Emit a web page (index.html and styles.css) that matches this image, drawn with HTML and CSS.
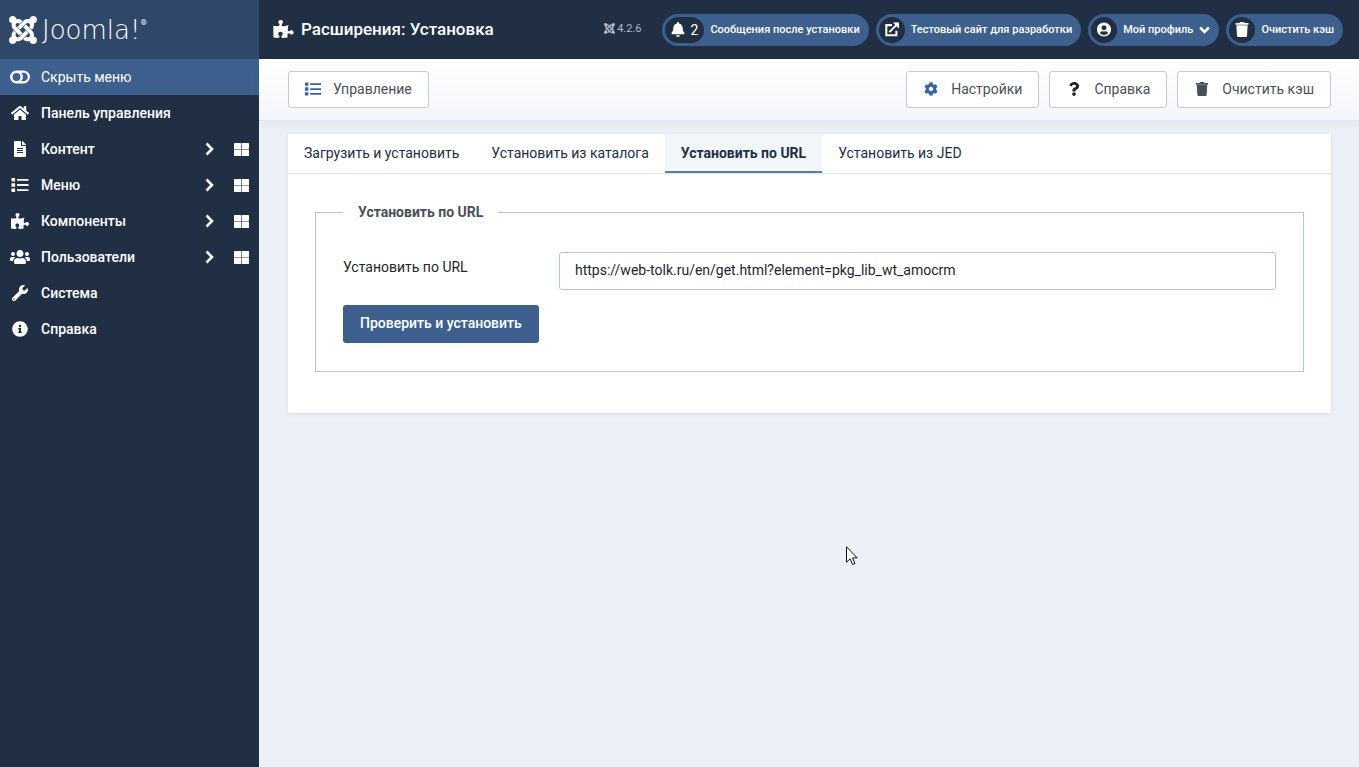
FILE: index.html
```html
<!DOCTYPE html>
<html lang="ru">
<head>
<meta charset="utf-8">
<meta name="viewport" content="width=device-width, initial-scale=1">
<title>Расширения: Установка</title>
<link rel="stylesheet" href="styles.css">
</head>
<body>
<svg class="sprite" aria-hidden="true">
  <symbol id="joomla" viewBox="0 32 448 448"><path d="M.6 92.1C.6 58.8 27.4 32 60.4 32c30 0 54.5 21.9 59.2 50.2 32.6-7.6 67.1.6 96.5 30l-44.3 44.3c-20.5-20.5-42.6-16.3-55.4-3.5-14.3 14.3-14.3 37.9 0 52.2l99.5 99.5-44 44.3c-87.7-87.2-49.7-49.7-99.8-99.7-26.8-26.5-35-64.8-24.8-98.9C20.4 144.6.6 120.7.6 92.1zm129.5 116.4l44.3 44.3c10-10 89.7-89.7 99.7-99.8 14.3-14.3 37.6-14.3 51.9 0 12.8 12.8 17 35-3.5 55.4l44 44.3c31.2-31.2 38.5-67.6 28.9-101.2 29.2-4.1 51.9-29.2 51.9-59.5 0-33.2-26.8-60.1-59.8-60.1-30.3 0-55.4 22.5-59.5 51.6-33.8-9.9-71.7-1.5-98.3 25.1-18.3 19.1-71.1 71.5-99.6 99.9zm266.3 152.2c8.2-32.7-.9-68.5-26.3-93.9-11.8-12.2 5 4.7-99.5-99.7l-44.3 44.3 99.7 99.7c14.3 14.3 14.3 37.6 0 51.9-12.8 12.8-35 17-55.4-3.5l-44 44.3c27.6 30.2 68 38.8 102.7 28 5.5 27.4 29.7 48.1 58.9 48.1 33 0 59.8-26.8 59.8-60.1 0-30.2-22.5-55-51.6-59.1zm-84.3-53.1l-44-44.3c-87 86.4-50.4 50.4-99.7 99.8-14.3 14.3-37.6 14.3-51.9 0-13.1-13.4-16.9-35.3 3.2-55.4l-44-44.3c-30.2 30.2-38 65.2-29.5 98.3-26.7 6-46.2 29.9-46.2 58.2C0 453.2 26.8 480 59.8 480c28.6 0 52.5-19.8 58.6-46.7 32.7 8.2 68.5-.6 94.2-26 32.1-32 12.2-12.4 99.5-99.7z"/></symbol>
  <symbol id="toggle" viewBox="0 0 20 13"><path fill-rule="evenodd" d="M6.500 0h7a6.500 6.500 0 0 1 0 13h-7a6.500 6.500 0 0 1 0-13zM6.500 2.500a4 4 0 1 0 0 8 4 4 0 0 0 0-8zM11.300 2.200h2.200a4.300 4.300 0 0 1 0 8.600h-2.200a6.500 6.500 0 0 0 0-8.600z"/></symbol>
  <symbol id="home" viewBox="0 0 576 512"><path d="M280.37 148.26L96 300.11V464a16 16 0 0 0 16 16l112.06-.29a16 16 0 0 0 15.92-16V368a16 16 0 0 1 16-16h64a16 16 0 0 1 16 16v95.64a16 16 0 0 0 16 16.05L464 480a16 16 0 0 0 16-16V300L295.67 148.26a12.19 12.19 0 0 0-15.3 0zM571.6 251.47L488 182.56V44.05a12 12 0 0 0-12-12h-56a12 12 0 0 0-12 12v72.61L318.47 43a48 48 0 0 0-61 0L4.34 251.47a12 12 0 0 0-1.6 16.9l25.5 31A12 12 0 0 0 45.15 301l235.22-193.74a12.19 12.19 0 0 1 15.3 0L530.9 301a12 12 0 0 0 16.9-1.6l25.5-31a12 12 0 0 0-1.7-16.93z"/></symbol>
  <symbol id="file" viewBox="0 0 384 512"><path d="M224 136V0H24C10.7 0 0 10.7 0 24v464c0 13.3 10.7 24 24 24h336c13.3 0 24-10.7 24-24V160H248c-13.2 0-24-10.8-24-24zm64 236c0 6.6-5.4 12-12 12H108c-6.600 0-12-5.400-12-12v-8c0-6.600 5.400-12 12-12h168c6.600 0 12 5.400 12 12v8zm0-64c0 6.600-5.400 12-12 12H108c-6.600 0-12-5.400-12-12v-8c0-6.600 5.400-12 12-12h168c6.600 0 12 5.400 12 12v8zm0-72v8c0 6.600-5.400 12-12 12H108c-6.600 0-12-5.400-12-12v-8c0-6.600 5.400-12 12-12h168c6.600 0 12 5.400 12 12zm96-114.100v6.100H256V0h6.100c6.400 0 12.500 2.500 17 7l97.900 98c4.500 4.500 7 10.600 7 16.900z"/></symbol>
  <symbol id="list" viewBox="0 0 17 14"><path d="M0 0h3.600v3.600H0zM0 5.200h3.600v3.600H0zM0 10.400h3.600V14H0zM5.500 .9h11.500v1.900H5.500zM5.500 6.100h11.500V8H5.500zM5.500 11.200h11.500v1.900H5.500z"/></symbol>
  <symbol id="puzzle" viewBox="0 0 576 512"><path d="M519.442 288.651c-41.519 0-59.5 31.593-82.058 31.593C377.409 320.244 432 144 432 144s-196.288 80-196.288-3.297c0-35.827 36.288-46.25 36.288-85.985C272 19.216 243.885 0 210.539 0c-34.654 0-66.366 18.891-66.366 56.346 0 41.364 31.711 59.277 31.711 81.75C175.885 207.719 0 166.758 0 166.758v333.237s178.635 41.047 178.635-28.662c0-22.473-40-40.107-40-81.471 0-37.456 29.25-56.346 63.577-56.346 33.673 0 61.788 19.216 61.788 54.717 0 39.735-36.288 50.158-36.288 85.985 0 60.803 129.675 25.73 181.23 25.73 0 0-34.725-120.101 25.827-120.101 35.962 0 46.423 36.152 86.308 36.152C556.712 416 576 387.99 576 354.443c0-34.199-18.962-65.792-56.558-65.792z"/></symbol>
  <symbol id="users" viewBox="0 0 640 512"><path d="M96 224c35.3 0 64-28.7 64-64s-28.7-64-64-64-64 28.7-64 64 28.7 64 64 64zm448 0c35.3 0 64-28.7 64-64s-28.7-64-64-64-64 28.7-64 64 28.7 64 64 64zm32 32h-64c-17.6 0-33.5 7.1-45.1 18.6 40.3 22.1 68.9 62 75.1 109.4h66c17.7 0 32-14.3 32-32v-32c0-35.3-28.7-64-64-64zm-256 0c61.9 0 112-50.1 112-112S381.9 32 320 32 208 82.1 208 144s50.1 112 112 112zm76.8 32h-8.3c-20.8 10-43.9 16-68.5 16s-47.6-6-68.5-16h-8.3C179.6 288 128 339.6 128 403.2V432c0 26.5 21.5 48 48 48h288c26.5 0 48-21.5 48-48v-28.8c0-63.6-51.6-115.2-115.2-115.2zm-223.7-13.4C161.5 263.1 145.6 256 128 256H64c-35.3 0-64 28.7-64 64v32c0 17.7 14.3 32 32 32h65.9c6.3-47.4 34.9-87.3 75.2-109.4z"/></symbol>
  <symbol id="wrench" viewBox="0 0 512 512"><path d="M507.73 109.1c-2.24-9.03-13.54-12.09-20.12-5.51l-74.36 74.36-67.88-11.31-11.31-67.88 74.36-74.36c6.62-6.62 3.43-17.9-5.66-20.16-47.38-11.74-99.55.91-136.58 37.93-39.64 39.64-50.55 97.1-34.05 147.2L18.74 402.76c-24.99 24.99-24.99 65.51 0 90.5 24.99 24.99 65.51 24.99 90.5 0l213.21-213.21c50.12 16.71 107.47 5.68 147.37-34.22 37.07-37.07 49.7-89.32 37.91-136.73zM64 472c-13.25 0-24-10.75-24-24 0-13.26 10.75-24 24-24s24 10.74 24 24c0 13.25-10.75 24-24 24z"/></symbol>
  <symbol id="info" viewBox="0 0 512 512"><path d="M256 8C119.043 8 8 119.083 8 256c0 136.997 111.043 248 248 248s248-111.003 248-248C504 119.083 392.957 8 256 8zm0 110c23.196 0 42 18.804 42 42s-18.804 42-42 42-42-18.804-42-42 18.804-42 42-42zm56 254c0 6.627-5.373 12-12 12h-88c-6.627 0-12-5.373-12-12v-24c0-6.627 5.373-12 12-12h12v-64h-12c-6.627 0-12-5.373-12-12v-24c0-6.627 5.373-12 12-12h64c6.627 0 12 5.373 12 12v100h12c6.627 0 12 5.373 12 12v24z"/></symbol>
  <symbol id="chevron" viewBox="0 0 10 14"><path d="M1.500 1.500L7 7l-5.500 5.500" fill="none" stroke="currentColor" stroke-width="2.600"/></symbol>
  <symbol id="chevron-down" viewBox="0 0 11 8"><path d="M1.200 1.500l4.300 4.300 4.300-4.300" fill="none" stroke="currentColor" stroke-width="2.600"/></symbol>
  <symbol id="grid" viewBox="0 0 15 13"><path d="M.5 0h6.700v6.200H0V.5zM7.800 0h6.700l.5.500v5.700H7.800zM0 6.800h7.200V13H.5l-.5-.5zM7.800 6.800H15v5.700l-.5.500H7.800z"/></symbol>
  <symbol id="bell" viewBox="0 0 448 512"><path d="M224 512c35.32 0 63.97-28.65 63.97-64H160.03c0 35.35 28.65 64 63.97 64zm215.39-149.71c-19.32-20.76-55.47-51.99-55.47-154.29 0-77.7-54.48-139.9-127.94-155.16V32c0-17.67-14.32-32-31.98-32s-31.98 14.33-31.98 32v20.84C118.56 68.1 64.08 130.3 64.08 208c0 102.3-36.15 133.53-55.47 154.29-6 6.45-8.66 14.16-8.61 21.71.11 16.4 12.98 32 32.1 32h383.8c19.12 0 32-15.6 32.1-32 .05-7.55-2.61-15.27-8.61-21.71z"/></symbol>
  <symbol id="external" viewBox="0 0 16 16"><path d="M8 3H1.500v11.500H13V9.500M5 11L13 3" fill="none" stroke="currentColor" stroke-width="2.300"/><path d="M9 0h7v7z"/></symbol>
  <symbol id="user" viewBox="0 0 496 512"><path d="M248 8C111 8 0 119 0 256s111 248 248 248 248-111 248-248S385 8 248 8zm0 96c48.6 0 88 39.4 88 88s-39.4 88-88 88-88-39.4-88-88 39.4-88 88-88zm0 344c-58.7 0-111.3-26.6-146.5-68.2 18.8-35.4 55.6-59.8 98.5-59.8 2.4 0 4.8.4 7.1 1.1 13 4.2 26.6 6.9 40.9 6.9 14.3 0 28-2.7 40.9-6.9 2.3-.7 4.7-1.1 7.1-1.1 42.9 0 79.7 24.4 98.5 59.8C359.3 421.4 306.7 448 248 448z"/></symbol>
  <symbol id="trash" viewBox="0 0 448 512"><path d="M432 32H312l-9.4-18.7A24 24 0 0 0 281.1 0H166.8a23.72 23.72 0 0 0-21.4 13.3L136 32H16A16 16 0 0 0 0 48v32a16 16 0 0 0 16 16h416a16 16 0 0 0 16-16V48a16 16 0 0 0-16-16zM32 112l21.200 355a48 48 0 0 0 47.9 45h245.8a48 48 0 0 0 47.9-45L416 112z"/></symbol>
  <symbol id="cog" viewBox="0 0 512 512"><path d="M487.4 315.7l-42.6-24.6c4.3-23.2 4.3-47 0-70.2l42.6-24.6c4.9-2.8 7.1-8.6 5.5-14-11.1-35.6-30-67.8-54.7-94.6-3.8-4.1-10-5.1-14.8-2.3L380.8 110c-17.9-15.4-38.5-27.3-60.8-35.1V25.8c0-5.6-3.9-10.5-9.4-11.7-36.7-8.2-74.3-7.8-109.2 0-5.5 1.2-9.4 6.1-9.4 11.7V75c-22.2 7.9-42.8 19.8-60.8 35.1L88.7 85.5c-4.9-2.8-11-1.9-14.8 2.3-24.7 26.7-43.6 58.9-54.7 94.6-1.7 5.4.6 11.2 5.5 14L67.3 221c-4.3 23.2-4.3 47 0 70.2l-42.6 24.6c-4.9 2.8-7.1 8.6-5.5 14 11.1 35.6 30 67.8 54.7 94.6 3.8 4.1 10 5.1 14.8 2.3l42.6-24.6c17.9 15.4 38.5 27.3 60.8 35.1v49.2c0 5.6 3.9 10.5 9.4 11.7 36.7 8.2 74.3 7.8 109.2 0 5.5-1.2 9.4-6.1 9.4-11.7v-49.2c22.2-7.9 42.8-19.8 60.8-35.1l42.6 24.6c4.9 2.8 11 1.9 14.8-2.3 24.7-26.7 43.6-58.9 54.7-94.6 1.5-5.500-.7-11.300-5.600-14.100zM256 336c-44.100 0-80-35.900-80-80s35.900-80 80-80 80 35.900 80 80-35.900 80-80 80z"/></symbol>
  <symbol id="help" viewBox="0 0 384 512"><path d="M202.021 0C122.202 0 70.503 32.703 29.914 91.026c-7.363 10.58-5.093 25.086 5.178 32.874l43.138 32.709c10.373 7.865 25.132 6.026 33.253-4.148 25.049-31.381 43.63-49.449 82.757-49.449 30.764 0 68.816 19.799 68.816 49.631 0 22.552-18.617 34.134-48.993 51.164-35.423 19.86-82.299 44.576-82.299 106.405V320c0 13.255 10.745 24 24 24h72.471c13.255 0 24-10.745 24-24v-5.773c0-42.86 125.268-44.645 125.268-160.627C377.504 66.256 286.902 0 202.021 0zM192 373.459c-38.196 0-69.271 31.075-69.271 69.271 0 38.195 31.075 69.27 69.271 69.27s69.271-31.075 69.271-69.271-31.075-69.27-69.271-69.27z"/></symbol>
</svg>

<aside class="sidebar">
  <a class="brand" href="#"><svg class="brand-mark"><use href="#joomla"/></svg><span class="brand-name">Joomla!</span><span class="brand-reg">®</span></a>
  <button class="menu-toggle" type="button"><svg class="menu-icon"><use href="#toggle"/></svg>Скрыть меню</button>
  <nav class="menu">
    <div class="menu-row"><a class="menu-link" href="#"><svg class="menu-icon"><use href="#home"/></svg>Панель управления</a></div>
    <div class="menu-row"><a class="menu-link" href="#"><svg class="menu-icon"><use href="#file"/></svg>Контент<svg class="menu-arrow"><use href="#chevron"/></svg></a><a class="menu-grid" href="#" aria-label="Панель: Контент"><svg><use href="#grid"/></svg></a></div>
    <div class="menu-row"><a class="menu-link" href="#"><svg class="menu-icon menu-icon-small"><use href="#list"/></svg>Меню<svg class="menu-arrow"><use href="#chevron"/></svg></a><a class="menu-grid" href="#" aria-label="Панель: Меню"><svg><use href="#grid"/></svg></a></div>
    <div class="menu-row"><a class="menu-link" href="#"><svg class="menu-icon"><use href="#puzzle"/></svg>Компоненты<svg class="menu-arrow"><use href="#chevron"/></svg></a><a class="menu-grid" href="#" aria-label="Панель: Компоненты"><svg><use href="#grid"/></svg></a></div>
    <div class="menu-row"><a class="menu-link" href="#"><svg class="menu-icon"><use href="#users"/></svg>Пользователи<svg class="menu-arrow"><use href="#chevron"/></svg></a><a class="menu-grid" href="#" aria-label="Панель: Пользователи"><svg><use href="#grid"/></svg></a></div>
    <div class="menu-row"><a class="menu-link" href="#"><svg class="menu-icon"><use href="#wrench"/></svg>Система</a></div>
    <div class="menu-row"><a class="menu-link" href="#"><svg class="menu-icon"><use href="#info"/></svg>Справка</a></div>
  </nav>
</aside>

<div class="page">
  <header class="header">
    <h1 class="title"><svg class="title-icon"><use href="#puzzle"/></svg>Расширения: Установка</h1>
    <div class="version"><svg><use href="#joomla"/></svg>4.2.6</div>
    <div class="header-items">
      <a class="pill" href="#"><span class="pill-icon"><svg><use href="#bell"/></svg>2</span>Сообщения после установки</a>
      <a class="pill" href="#"><span class="pill-icon"><svg><use href="#external"/></svg></span>Тестовый сайт для разработки</a>
      <button class="pill" type="button"><span class="pill-icon"><svg><use href="#user"/></svg></span>Мой профиль<svg class="caret"><use href="#chevron-down"/></svg></button>
      <a class="pill" href="#"><span class="pill-icon"><svg><use href="#trash"/></svg></span>Очистить кэш</a>
    </div>
  </header>

  <div class="toolbar">
    <button class="btn" type="button"><svg class="blue"><use href="#list"/></svg>Управление</button>
    <div class="toolbar-end">
      <button class="btn" type="button"><svg class="blue"><use href="#cog"/></svg>Настройки</button>
      <button class="btn" type="button"><svg class="dark"><use href="#help"/></svg>Справка</button>
      <button class="btn" type="button"><svg><use href="#trash"/></svg>Очистить кэш</button>
    </div>
  </div>

  <main class="content">
    <section class="card">
      <div class="tabs" role="tablist">
        <button class="tab" type="button" role="tab">Загрузить и установить</button>
        <button class="tab" type="button" role="tab">Установить из каталога</button>
        <button class="tab tab-active" type="button" role="tab" aria-selected="true">Установить по URL</button>
        <button class="tab" type="button" role="tab">Установить из JED</button>
      </div>
      <form class="panel">
        <fieldset class="fieldset">
          <legend class="legend">Установить по URL</legend>
          <div class="field">
            <label class="label" for="install-url">Установить по URL</label>
            <input class="input" id="install-url" type="text" value="https://web-tolk.ru/en/get.html?element=pkg_lib_wt_amocrm">
          </div>
          <button class="submit" type="button">Проверить и установить</button>
        </fieldset>
      </form>
    </section>
  </main>
</div>
<svg class="cursor" viewBox="0 0 12 20" aria-hidden="true"><path d="M.5.8v15.400l3.600-3.400 2.500 5.700 2.400-1-2.500-5.600h4.700z" fill="#fff" stroke="#111" stroke-width="1"/></svg>
</body>
</html>
```

FILE: styles.css
```css
* { box-sizing: border-box; }

body {
  display: flex;
  min-height: 100vh;
  margin: 0;
  background: #ebf1f6;
  color: #22262a;
  font-family: Roboto, "Noto Sans", sans-serif;
  font-size: 14px;
  line-height: 20px;
}

a { color: inherit; text-decoration: none; }
button, input { font: inherit; }
button { cursor: pointer; }
svg { flex: none; fill: currentColor; }
.sprite { position: absolute; width: 0; height: 0; }

.sidebar {
  flex: none;
  width: 259px;
  background: #212f45;
  color: #fff;
}
.brand {
  display: flex;
  align-items: center;
  height: 59px;
  padding-left: 9px;
  background: #2f486a;
}
.brand-mark { width: 28px; height: 28px; }
.brand-name {
  padding-left: 5px;
  font-family: "DejaVu Sans", sans-serif;
  font-size: 26px;
  font-weight: 200;
}
.brand-reg { align-self: flex-start; padding-top: 13px; font-size: 8px; }
.menu-toggle, .menu-link {
  display: flex;
  align-items: center;
  flex: 1;
  gap: 11px;
  height: 36px;
  padding: 0 9px 0 10px;
}
.menu-link { font-weight: 500; }
.menu-toggle {
  width: 100%;
  border: 0;
  background: #3d608e;
  color: #fff;
}
.menu-row { display: flex; }
.menu-icon { width: 20px; height: 16px; }
.menu-icon-small { height: 14px; }
.menu-arrow { width: 10px; height: 14px; margin-left: auto; }
.menu-grid { display: flex; align-items: center; padding: 0 10px; }
.menu-grid svg { width: 15px; height: 13px; }

.page { flex: 1; min-width: 0; }
.header {
  display: flex;
  align-items: center;
  height: 59px;
  padding: 0 16px 0 14px;
  background: #212f45;
  color: #fff;
}
.title {
  display: flex;
  align-items: center;
  gap: 7px;
  margin: 0 auto 0 0;
  padding-bottom: 2px;
  font-size: 17px;
  font-weight: 500;
}
.title-icon { width: 21px; height: 18px; }
.version {
  display: flex;
  align-items: center;
  gap: 2px;
  margin-right: 20px;
  padding-bottom: 2px;
  color: #b3b9c6;
  font-size: 11px;
}
.version svg { width: 11px; height: 11px; }
.header-items { display: flex; gap: 7px; }
.pill {
  display: flex;
  align-items: center;
  gap: 6px;
  height: 32px;
  padding: 0 9px 0 3px;
  border: 0;
  border-radius: 16px;
  background: #3d608e;
  color: #fff;
  font-size: 11px;
  font-weight: 500;
  white-space: nowrap;
}
.pill-icon {
  display: flex;
  align-items: center;
  justify-content: center;
  gap: 6px;
  min-width: 26px;
  height: 26px;
  padding: 0 6px;
  border-radius: 13px;
  background: #212f45;
  font-size: 14px;
  font-weight: 400;
}
.pill-icon svg { width: 14px; height: 15px; }
.caret { width: 11px; height: 8px; }

.toolbar {
  display: flex;
  justify-content: space-between;
  height: 62px;
  padding: 12px 28px 0 29px;
  border-bottom: 1px solid #dfe5ef;
  background: linear-gradient(#fff, #f3f6fa);
  box-shadow: 0 3px 8px rgba(40, 70, 140, 0.06);
}
.toolbar-end { display: flex; gap: 10px; }
.btn {
  display: flex;
  align-items: center;
  gap: 12px;
  height: 37px;
  padding: 0 16px 1px;
  border: 1px solid #c4cad6;
  border-radius: 3px;
  background: #fff;
  color: #495057;
}
.btn svg { width: 16px; height: 14px; }
.btn .blue { color: #3764a8; }
.btn .dark { color: #22262a; }

.content { padding: 13px 28px 28px 29px; }
.card { background: #fff; box-shadow: 0 1px 4px rgba(40, 70, 110, 0.1); }
.tabs { display: flex; border-bottom: 1px solid #dee4ed; }
.tab {
  height: 39px;
  padding: 0 16px;
  border: 0;
  border-bottom: 2px solid transparent;
  background: none;
  color: #212f45;
}
.tab-active {
  border-bottom-color: #5680ac;
  background: #f2f6f9;
  font-weight: 700;
}
.panel { padding: 28px 27px 41px; }
.fieldset {
  min-width: 0;
  margin: 0;
  padding: 30px 27px 28px;
  border: 1px solid #b9c4d4;
}
.legend { padding: 0 15px; color: #495057; font-weight: 700; }
.field { display: flex; align-items: flex-start; margin-bottom: 15px; }
.label { width: 216px; padding-top: 5px; }
.input {
  flex: 1;
  min-width: 0;
  height: 38px;
  padding: 0 15px 2px;
  border: 1px solid #b9c4d4;
  border-radius: 3px;
  background: #fff;
  color: #22262a;
}
.submit {
  height: 38px;
  padding: 0 17px 2px;
  border: 0;
  border-radius: 3px;
  background: #3d608e;
  color: #fff;
  font-weight: 500;
}
.cursor {
  position: absolute;
  left: 846px;
  top: 546px;
  width: 12px;
  height: 20px;
}
```
